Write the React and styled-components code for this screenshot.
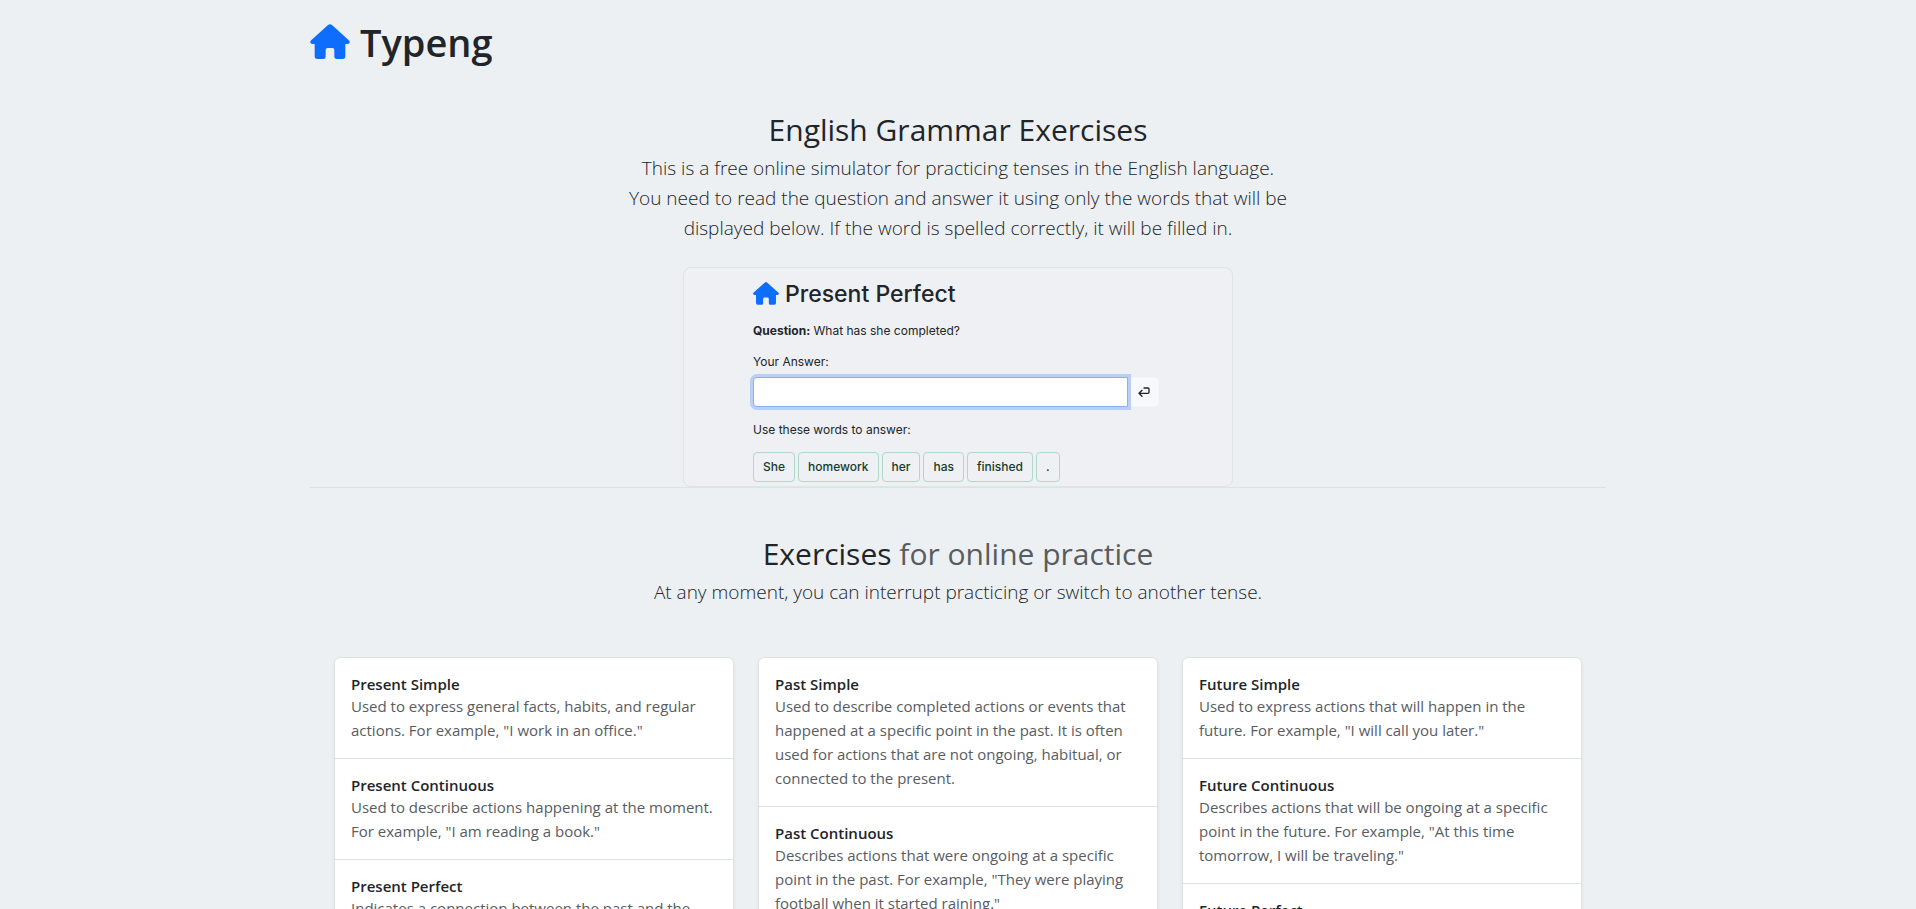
import React, { useState } from "react";
import styled, { createGlobalStyle } from "styled-components";

const GlobalStyle = createGlobalStyle`
  * {
    box-sizing: border-box;
  }
  body {
    margin: 0;
    background: #ecf0f3;
    color: #212529;
    font-family: "Open Sans", "Noto Sans", sans-serif;
    font-size: 15px;
    line-height: 24px;
  }
  h1, h2, h3, p, ul {
    margin: 0;
    padding: 0;
  }
`

const Container = styled.div`
  max-width: 1320px;
  margin: 0 auto;
  padding: 0 12px;
`

const Header = styled.header`
  display: flex;
  align-items: center;
  gap: 10px;
  padding: 18px 0 45px;
`

const Brand = styled.h1`
  font-size: 38px;
  line-height: 48px;
  font-weight: 600;
`

const HomeLink = styled.a`
  display: flex;
  padding-bottom: 2px;
  color: #0d6efd;
`

const House = styled.svg`
  display: block;
  width: ${(props) => props.$width}px;
  overflow: visible;
  fill: currentColor;
`

const Intro = styled.section`
  max-width: 662px;
  margin: 0 auto;
  text-align: center;
`

const Heading = styled.h2`
  margin-bottom: 4px;
  font-size: 30px;
  line-height: 38px;
  font-weight: 400;
`

const Muted = styled.span`
  color: #585c60;
`

const Lead = styled.p`
  font-size: 19px;
  line-height: 30px;
  font-weight: 300;
`

const Preview = styled.section`
  max-width: 550px;
  margin: 24px auto 0;
  padding: 12px 73px 4px 69px;
  border: 1px solid #dfe4e8;
  border-radius: 8px;
  background: #eef0f3;
  font-family: Inter, "Liberation Sans", sans-serif;
  font-size: 12px;
  line-height: 18px;
`

const PreviewTitle = styled.div`
  display: flex;
  align-items: center;
  gap: 6px;
  margin-bottom: 14px;
`

const Tense = styled.h3`
  font-size: 23px;
  line-height: 28px;
  font-weight: 500;
`

const Question = styled.p`
  margin-bottom: 13px;
`

const AnswerLabel = styled.label`
  display: block;
  margin-bottom: 6px;
`

const AnswerRow = styled.div`
  display: flex;
  margin-bottom: 14px;
`

const AnswerInput = styled.input`
  position: relative;
  z-index: 1;
  flex: 1;
  min-width: 0;
  height: 30px;
  padding: 0 8px;
  border: 1px solid #86b0f8;
  border-radius: 4px 0 0 4px;
  background: white;
  box-shadow: 0 0 0 3px #bacff6;
  font: inherit;
  outline: none;
`

const EnterButton = styled.button`
  display: flex;
  align-items: center;
  justify-content: center;
  width: 31px;
  height: 30px;
  padding: 0;
  border: 1px solid #f4f6f9;
  border-radius: 0 4px 4px 0;
  background: #f8f9fc;
  color: #212529;
`

const Words = styled.div`
  display: flex;
  gap: 3px;
  margin-top: 13px;
`

const Word = styled.button`
  height: 30px;
  padding: 0 9px;
  border: 1px solid #b0d8c8;
  border-radius: 4px;
  background: transparent;
  color: #163b2e;
  font: inherit;
  font-weight: 500;
`

const Divider = styled.hr`
  height: 1px;
  margin: 0 0 47px;
  border: 0;
  background: #dfe2e5;
`

const Columns = styled.div`
  display: grid;
  grid-template-columns: repeat(3, 1fr);
  align-items: start;
  gap: 24px;
  padding: 50px 24px 48px;
`

const List = styled.ul`
  border: 1px solid #dee2e6;
  border-radius: 6px;
  background: white;
  list-style: none;
  box-shadow: 0 2px 4px rgba(0, 0, 0, 0.05);
`

const Item = styled.li`
  & + & {
    border-top: 1px solid #dee2e6;
  }
`

const ItemLink = styled.a`
  display: block;
  padding: 17px 16px 16px;
  color: inherit;
  text-decoration: none;
`

const ItemTitle = styled.h3`
  font-size: 15px;
  line-height: 19px;
  font-weight: 600;
`

const ItemText = styled.p`
  color: #585c5f;
`

const words = ["She", "homework", "her", "has", "finished", "."]

const tenses = [
  [
    { name: "Present Simple", text: 'Used to express general facts, habits, and regular actions. For example, "I work in an office."' },
    { name: "Present Continuous", text: 'Used to describe actions happening at the moment. For example, "I am reading a book."' },
    { name: "Present Perfect", text: "Indicates a connection between the past and the present." },
  ],
  [
    { name: "Past Simple", text: "Used to describe completed actions or events that happened at a specific point in the past. It is often used for actions that are not ongoing, habitual, or connected to the present." },
    { name: "Past Continuous", text: 'Describes actions that were ongoing at a specific point in the past. For example, "They were playing football when it started raining."' },
  ],
  [
    { name: "Future Simple", text: 'Used to express actions that will happen in the future. For example, "I will call you later."' },
    { name: "Future Continuous", text: 'Describes actions that will be ongoing at a specific point in the future. For example, "At this time tomorrow, I will be traveling."' },
    { name: "Future Perfect" },
  ],
]

const HouseIcon = ({ width }) => (
  <House $width={width} viewBox="0 0 120 105" aria-hidden="true">
    <path d="M54 3Q60-2 66 3L118 50Q121 54 118 58Q116 60 112 60H106V97Q106 105 98 105H80Q73 105 73 98V78Q73 72 67 72H53Q47 72 47 78V98Q47 105 40 105H22Q14 105 14 97V60H8Q4 60 2 58Q-1 54 2 50Z" />
  </House>
)

const EnterIcon = () => (
  <svg width="12" height="12" viewBox="0 0 36 36" fill="none" stroke="currentColor" strokeWidth="4" strokeLinecap="round" strokeLinejoin="round" aria-hidden="true">
    <path d="M18 6H30Q33 6 33 9V19Q33 22 30 22H4M12 13L3 22L12 31" />
  </svg>
)

const Exercise = () => {
  const [answer, setAnswer] = useState("")
  const addWord = (word) => {
    setAnswer(answer ? answer + " " + word : word)
  }
  return (
    <Preview>
      <PreviewTitle>
        <HomeLink href="#home" aria-label="Home"><HouseIcon width={26} /></HomeLink>
        <Tense>Present Perfect</Tense>
      </PreviewTitle>
      <Question><b>Question:</b> What has she completed?</Question>
      <AnswerLabel htmlFor="answer">Your Answer:</AnswerLabel>
      <AnswerRow>
        <AnswerInput id="answer" value={answer} onChange={(e) => setAnswer(e.target.value)} />
        <EnterButton type="button" aria-label="Enter"><EnterIcon /></EnterButton>
      </AnswerRow>
      <p>Use these words to answer:</p>
      <Words>
        {words.map((word) => (
          <Word key={word} type="button" onClick={() => addWord(word)}>{word}</Word>
        ))}
      </Words>
    </Preview>
  )
}

const App = () => {
  return (
    <Container>
      <GlobalStyle />
      <Header>
        <HomeLink href="#home" aria-label="Home"><HouseIcon width={40} /></HomeLink>
        <Brand>Typeng</Brand>
      </Header>
      <main>
        <Intro>
          <Heading>English Grammar Exercises</Heading>
          <Lead>
            This is a free online simulator for practicing tenses in the English language.
            You need to read the question and answer it using only the words that will be
            displayed below. If the word is spelled correctly, it will be filled in.
          </Lead>
        </Intro>
        <Exercise />
        <Divider />
        <Intro>
          <Heading>Exercises <Muted>for online practice</Muted></Heading>
          <Lead>At any moment, you can interrupt practicing or switch to another tense.</Lead>
        </Intro>
        <Columns>
          {tenses.map((column) => (
            <List key={column[0].name}>
              {column.map((tense) => (
                <Item key={tense.name}>
                  <ItemLink href="#exercise">
                    <ItemTitle>{tense.name}</ItemTitle>
                    {tense.text && <ItemText>{tense.text}</ItemText>}
                  </ItemLink>
                </Item>
              ))}
            </List>
          ))}
        </Columns>
      </main>
    </Container>
  )
}

export default App
